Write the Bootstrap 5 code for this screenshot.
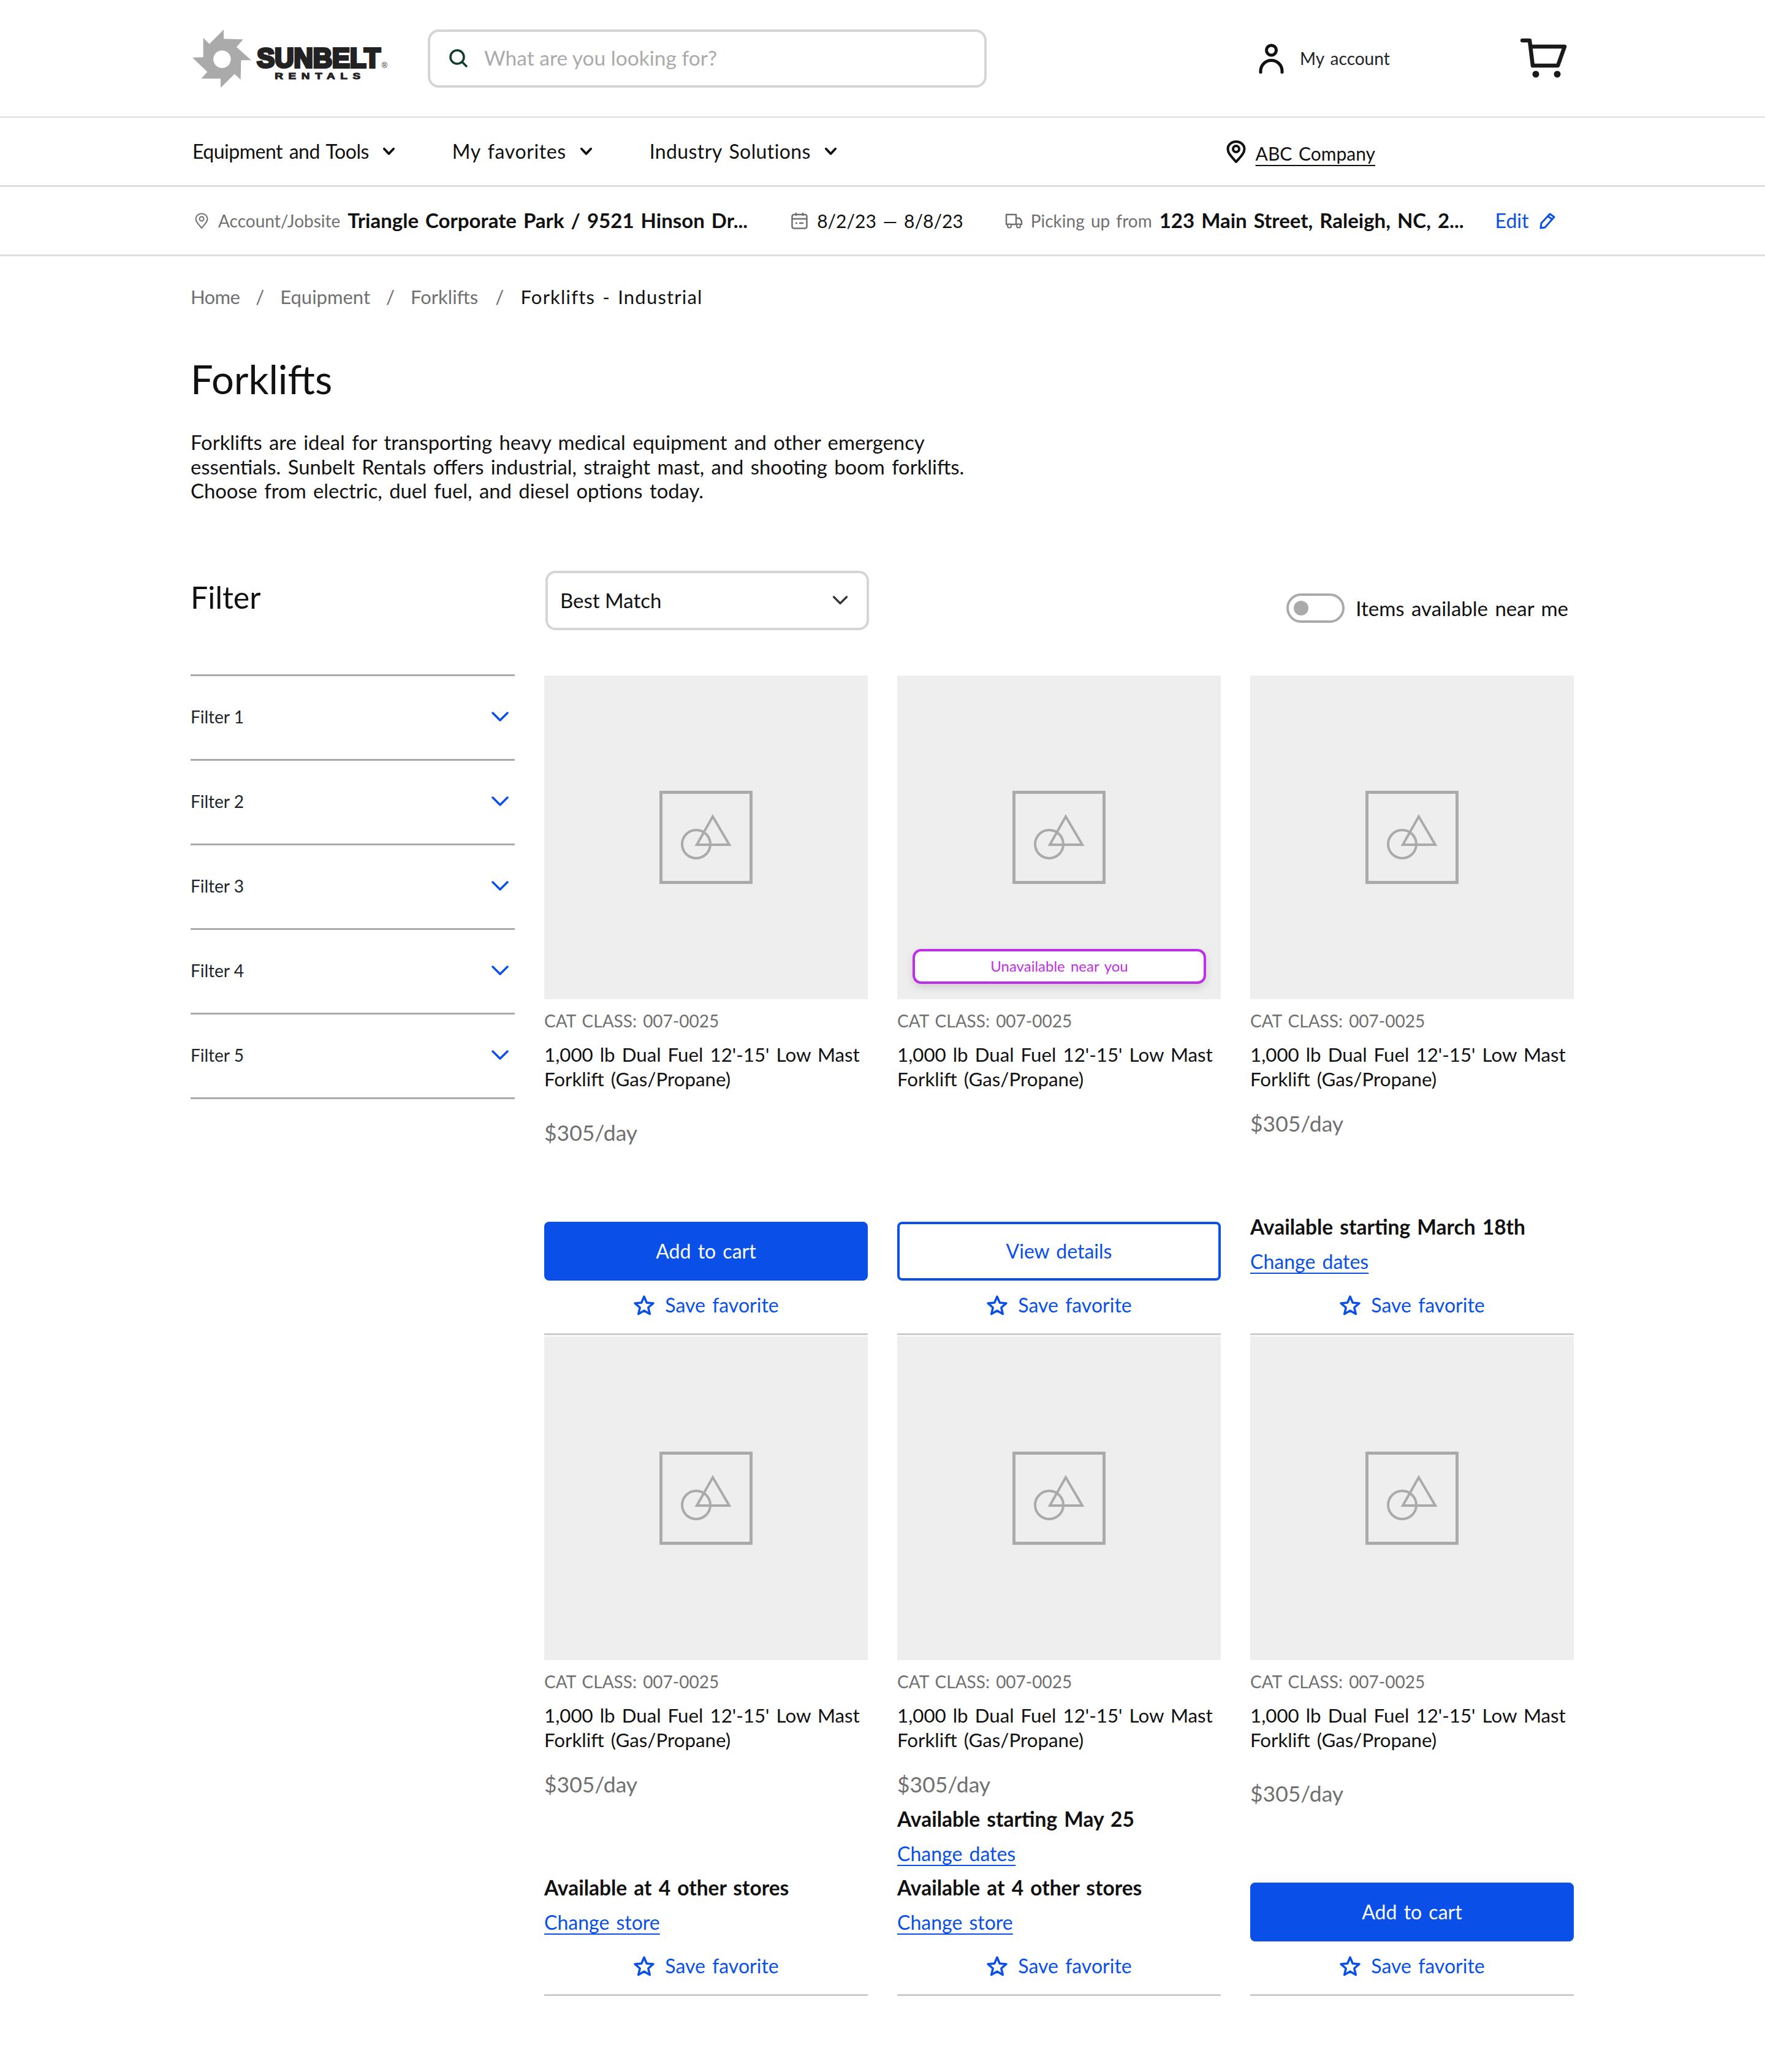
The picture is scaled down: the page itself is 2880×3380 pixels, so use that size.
<!DOCTYPE html>
<html lang="en"><head><meta charset="utf-8"><title>Forklifts</title>
<link href="https://cdn.jsdelivr.net/npm/bootstrap@5.3.0/dist/css/bootstrap.min.css" rel="stylesheet">
<style>
body{font-family:"Lato","Noto Sans",sans-serif;font-size:32px;color:#111;background:#fff;min-height:3380px;word-spacing:3px}
a{text-decoration:none}
.sb-blue{color:#0a50e8}
.sb-grey{color:#707070}
.top-bar{height:192px;padding-left:300px;border-bottom:2px solid #ddd}
.sb-search{width:912px;height:95px;margin-left:38px;border:4px solid #d5d5d5;border-radius:18px;padding-left:30px;gap:26px}
.sb-search input{border:0;outline:0;padding:0 0 2px;flex:1;font-size:33.5px;background:transparent;box-shadow:none}
.sb-search input::placeholder{color:#aaa}
.sb-account{margin-left:444px;gap:26px;font-size:28px}
.sb-cart{margin-left:213px}
.main-nav{height:113px;padding-left:314px;padding-right:636px;border-bottom:3px solid #ddd}
.main-nav .sb-item{color:#111;margin-right:93px;gap:22px}
.main-nav .sb-item:nth-child(1){letter-spacing:-.5px}
.main-nav .sb-item:nth-child(2){letter-spacing:.6px}
.main-nav .sb-item:nth-child(3){letter-spacing:.4px}
.sb-company{gap:18px;margin-top:6px;color:#111;font-size:30px;text-decoration:underline;text-underline-offset:7px;text-decoration-thickness:2px}
.sub-bar{height:113px;padding-left:318px;border-bottom:3px solid #ddd}
.sub-bar .sb-small{font-size:28px;color:#707070;margin-right:12px}
.sub-bar b{font-weight:700;font-size:33px}
.sb-dates{font-size:30px}
.sb-edit{margin-left:51px;gap:17px}
.sb-ic-cal{margin-left:71px;margin-right:15px}
.sb-ic-truck{margin-left:68px;margin-right:13px}
.page-main{padding:0 312px 0 311px}
.sb-crumbs{margin:0;padding-top:47px;font-size:31px;line-height:38px;--bs-breadcrumb-divider-color:#707070;--bs-breadcrumb-item-padding-x:26px}
.sb-crumbs a{color:#707070}
.sb-crumbs li:first-child a{letter-spacing:-.6px}
.sb-crumbs .active{color:#111;letter-spacing:1.2px;padding-left:28px}
.sb-title{font-size:65px;font-weight:400;line-height:80px;margin:75px 0 0}
.sb-intro{width:1290px;line-height:39.5px;margin:44px 0 0;font-size:32.8px}
.sb-layout{margin-top:110px;gap:48px}
.sb-side{width:529px;flex:none}
.sb-side h2{font-size:50px;font-weight:400;line-height:60px;margin:13px 0 96px}
.list-group-flush>.sb-filter{height:138px;border-width:3px 0 0;border-style:solid;border-color:#aaa;padding:0 0 3px;font-size:28px;border-radius:0;background:transparent}
.list-group-flush>.sb-filter:last-child{height:141px;border-width:3px 0}
.sb-filter svg{margin-right:10px}
.sb-toolbar{height:97px;margin-bottom:74px}
.sb-select{width:528px;height:97px;margin-left:2px;border:4px solid #d5d5d5;border-radius:16px;padding:2px 20px 0;font-size:33px;color:#111;background-size:28px;background-position:right 29px center}
.sb-switch{gap:18px;margin:0 9px 0 0;padding:37px 0 0;min-height:0}
.sb-switch .form-check-input{width:95px;height:48px;margin:0;float:none;border:4px solid #aaa;background-position:left center;background-size:40px;background-image:url("data:image/svg+xml,%3csvg xmlns='http://www.w3.org/2000/svg' viewBox='-4 -4 8 8'%3e%3ccircle r='2.4' fill='%23aaa'/%3e%3c/svg%3e");box-shadow:none}
.sb-switch label{font-size:33px}
.sb-grid{grid-template-columns:repeat(3,528px);column-gap:48px;row-gap:2px}
.sb-prod{min-height:1076px;border-bottom:3px solid #ccc}
.sb-pic{height:528px;background:#eee;position:relative}
.sb-flag{position:absolute;left:25px;right:24px;bottom:25px;height:57px;background:#fff;border:4px solid #bf2fe8;border-radius:14px;color:#bf2fe8;font-size:24px;box-shadow:0 6px 14px rgba(0,0,0,.12)}
.sb-cat{margin-top:20px;font-size:28px;line-height:30px;color:#707070}
.sb-name{margin-top:20px;line-height:40px;font-size:31.3px}
.sb-price{font-size:35.5px;line-height:44px;color:#707070;margin-top:31px}
.sb-price.sb-low{margin-top:46px}
.sb-foot{margin-top:auto}
.sb-avail{padding-bottom:11px}
.sb-avail b{display:block;line-height:40px;font-size:33.5px;font-weight:700;margin-bottom:17px}
.sb-avail a{display:block;line-height:40px;text-decoration:underline;text-underline-offset:6px;text-decoration-thickness:2px}
.sb-avail + .sb-avail{margin-top:4px}
.sb-prod .btn{height:96px;width:100%;font-size:32px;border-radius:8px;border-width:4px}
.sb-prod .btn-primary{--bs-btn-bg:#0a50e8;--bs-btn-border-color:#0a50e8;--bs-btn-color:#fff}
.sb-prod .btn-outline-primary{--bs-btn-bg:#fff;--bs-btn-border-color:#0a50e8;--bs-btn-color:#0a50e8;background:#fff}
.sb-save{height:86px;padding-bottom:6px;gap:16px;color:#0a50e8}
</style></head><body>
<svg width="0" height="0" class="position-absolute"><defs>
<symbol id="ph" viewBox="0 0 152 152"><rect x="2.5" y="2.5" width="147" height="147" fill="none" stroke="#aaa" stroke-width="5"/><circle cx="60" cy="87" r="23" fill="none" stroke="#aaa" stroke-width="4"/><path d="M87 42 61 88h53z" fill="none" stroke="#aaa" stroke-width="4"/></symbol>
<symbol id="star" viewBox="0 0 36 34"><path d="M18 3 22.2 13 33 13.9 24.800 21 27.300 31.500 18 25.900 8.700 31.500 11.200 21 3 13.900 13.800 13z" fill="none" stroke="#0a50e8" stroke-width="3.500" stroke-linejoin="round"/></symbol>
<symbol id="chev" viewBox="0 0 22 14"><path d="M3 2.500 11 11 19 2.500" fill="none" stroke="#111" stroke-width="4" stroke-linecap="round" stroke-linejoin="round"/></symbol>
<symbol id="fchev" viewBox="0 0 28 16"><path d="M2 2 14 14 26 2" fill="none" stroke="#0a50e8" stroke-width="3.500" stroke-linecap="round" stroke-linejoin="round"/></symbol>
</defs></svg>

<header class="top-bar d-flex align-items-center">
<svg width="360" height="130" viewBox="0 0 1080 390" role="img" aria-label="Sunbelt Rentals">
<path fill="#aaa" fill-rule="evenodd" d="M195 55 195 100 290 103 258 140 330 205 280 205 278 300 248 272 180 340 180 295 85 295 115 262 42 192 95 190 95 95 125 125zM187 157a43 43 0 1 0 .1 0z"/>
<text x="358" y="240" font-family="Liberation Sans" font-weight="700" font-size="132" fill="#222" stroke="#222" stroke-width="12" textLength="604" lengthAdjust="spacingAndGlyphs">SUNBELT</text>
<text x="445" y="297" font-family="Liberation Sans" font-weight="700" font-size="44" letter-spacing="20" fill="#222" stroke="#222" stroke-width="3" textLength="445" lengthAdjust="spacingAndGlyphs">RENTALS</text>
<text x="968" y="243" font-family="Liberation Sans" font-size="38" fill="#222">®</text>
</svg>
<form class="sb-search d-flex align-items-center">
<svg width="32" height="32" viewBox="0 0 32 32"><circle cx="14" cy="14" r="11" fill="none" stroke="#0f3d2e" stroke-width="3.500"/><path d="M22 22 29 29" stroke="#0f3d2e" stroke-width="3.500" stroke-linecap="round"/></svg>
<input type="text" class="form-control" placeholder="What are you looking for?">
</form>
<a href="#" class="sb-account d-flex align-items-center text-dark">
<svg width="41" height="50" viewBox="0 0 41 50"><circle cx="20.500" cy="12" r="8" fill="none" stroke="#111" stroke-width="5"/><path d="M3 48V46a17.500 17.500 0 0 1 35 0V48" fill="none" stroke="#111" stroke-width="5" stroke-linecap="round"/></svg>
My account</a>
<a href="#" class="sb-cart d-block" aria-label="Cart">
<svg width="76" height="68" viewBox="0 0 76 68"><path d="M3 5H15L20 46H61L72 15H17" fill="none" stroke="#1a1a1a" stroke-width="6.500" stroke-linecap="round" stroke-linejoin="round"/><circle cx="25" cy="60" r="5.500" fill="#1a1a1a"/><circle cx="60" cy="60" r="5.500" fill="#1a1a1a"/></svg></a>
</header>

<nav class="main-nav d-flex align-items-center">
<a href="#" class="sb-item d-flex align-items-center">Equipment and Tools <svg width="21" height="14"><use href="#chev"/></svg></a>
<a href="#" class="sb-item d-flex align-items-center">My favorites <svg width="21" height="14"><use href="#chev"/></svg></a>
<a href="#" class="sb-item d-flex align-items-center">Industry Solutions <svg width="21" height="14"><use href="#chev"/></svg></a>
<div class="ms-auto d-flex align-items-center gap-3">
<svg width="32" height="37" viewBox="0 0 32 37"><path d="M16 35C8 26 2.500 21 2.500 14a13.500 12 0 0 1 27 0C29.500 21 24 26 16 35z" fill="none" stroke="#111" stroke-width="4" stroke-linejoin="round"/><circle cx="16" cy="14" r="5" fill="none" stroke="#111" stroke-width="4"/></svg>
<a href="#" class="sb-company">ABC Company</a></div>
</nav>

<div class="sub-bar d-flex align-items-center">
<svg width="22" height="26" viewBox="0 0 22 26" class="me-3"><path d="M11 25C5 18 1.500 14.500 1.500 10a9.500 8.500 0 0 1 19 0C20.500 14.500 17 18 11 25z" fill="none" stroke="#707070" stroke-width="2"/><circle cx="11" cy="10" r="3.500" fill="none" stroke="#707070" stroke-width="2"/></svg>
<span class="sb-small">Account/Jobsite</span>
<b>Triangle Corporate Park / 9521 Hinson Dr...</b>
<svg width="27" height="28" viewBox="0 0 27 28" class="sb-ic-cal"><rect x="1.500" y="4" width="24" height="22.500" rx="3" fill="none" stroke="#707070" stroke-width="2.500"/><path d="M1.500 11H25.500M8 1V6M19 1V6M7 18H10M13 18H20" stroke="#707070" stroke-width="2.500"/></svg>
<span class="sb-dates">8/2/23 — 8/8/23</span>
<svg width="29" height="26" viewBox="0 0 29 26" class="sb-ic-truck"><path d="M2 3H18V19H2zM18 9H24L27 14V19H18" fill="none" stroke="#707070" stroke-width="2.500" stroke-linejoin="round"/><circle cx="7" cy="21.500" r="3" fill="#fff" stroke="#707070" stroke-width="2"/><circle cx="22" cy="21.500" r="3" fill="#fff" stroke="#707070" stroke-width="2"/></svg>
<span class="sb-small">Picking up from</span>
<b>123 Main Street, Raleigh, NC, 2...</b>
<a href="#" class="sb-blue sb-edit d-flex align-items-center">Edit
<svg width="28" height="28" viewBox="0 0 28 28"><path d="M18 3 25 8 10 25 3 26 4 18z" fill="none" stroke="#0a50e8" stroke-width="3" stroke-linejoin="round"/><path d="M15 7 22 12" stroke="#0a50e8" stroke-width="3"/></svg></a>
</div>

<main class="page-main">
<ol class="breadcrumb sb-crumbs">
<li class="breadcrumb-item"><a href="#">Home</a></li>
<li class="breadcrumb-item"><a href="#">Equipment</a></li>
<li class="breadcrumb-item"><a href="#">Forklifts</a></li>
<li class="breadcrumb-item active">Forklifts - Industrial</li>
</ol>
<h1 class="sb-title">Forklifts</h1>
<p class="sb-intro">Forklifts are ideal for transporting heavy medical equipment and other emergency essentials. Sunbelt Rentals offers industrial, straight mast, and shooting boom forklifts. Choose from electric, duel fuel, and diesel options today.</p>

<div class="d-flex sb-layout">
<aside class="sb-side">
<h2>Filter</h2>
<div class="list-group list-group-flush">
<button class="list-group-item sb-filter d-flex justify-content-between align-items-center">Filter 1<svg width="28" height="16"><use href="#fchev"/></svg></button>
<button class="list-group-item sb-filter d-flex justify-content-between align-items-center">Filter 2<svg width="28" height="16"><use href="#fchev"/></svg></button>
<button class="list-group-item sb-filter d-flex justify-content-between align-items-center">Filter 3<svg width="28" height="16"><use href="#fchev"/></svg></button>
<button class="list-group-item sb-filter d-flex justify-content-between align-items-center">Filter 4<svg width="28" height="16"><use href="#fchev"/></svg></button>
<button class="list-group-item sb-filter d-flex justify-content-between align-items-center">Filter 5<svg width="28" height="16"><use href="#fchev"/></svg></button>
</div>
</aside>
<section class="flex-grow-1">
<div class="sb-toolbar d-flex justify-content-between align-items-start">
<select class="form-select sb-select"><option>Best Match</option></select>
<div class="form-check form-switch sb-switch d-flex align-items-center"><input class="form-check-input" type="checkbox" id="near" role="switch"><label class="form-check-label" for="near">Items available near me</label></div>
</div>
<div class="d-grid sb-grid">

<article class="sb-prod d-flex flex-column">
<div class="sb-pic d-flex align-items-center justify-content-center"><svg width="152" height="152"><use href="#ph"/></svg></div>
<div class="sb-cat">CAT CLASS: 007-0025</div>
<div class="sb-name">1,000 lb Dual Fuel 12'-15' Low Mast Forklift (Gas/Propane)</div>
<div class="sb-price sb-low">$305/day</div>
<div class="sb-foot"><a href="#" class="btn btn-primary d-flex align-items-center justify-content-center">Add to cart</a>
<a href="#" class="sb-save d-flex align-items-center justify-content-center"><svg width="36" height="34"><use href="#star"/></svg>Save favorite</a></div>
</article>

<article class="sb-prod d-flex flex-column">
<div class="sb-pic d-flex align-items-center justify-content-center"><svg width="152" height="152"><use href="#ph"/></svg><div class="sb-flag d-flex align-items-center justify-content-center">Unavailable near you</div></div>
<div class="sb-cat">CAT CLASS: 007-0025</div>
<div class="sb-name">1,000 lb Dual Fuel 12'-15' Low Mast Forklift (Gas/Propane)</div>
<div class="sb-foot"><a href="#" class="btn btn-outline-primary d-flex align-items-center justify-content-center">View details</a>
<a href="#" class="sb-save d-flex align-items-center justify-content-center"><svg width="36" height="34"><use href="#star"/></svg>Save favorite</a></div>
</article>

<article class="sb-prod d-flex flex-column">
<div class="sb-pic d-flex align-items-center justify-content-center"><svg width="152" height="152"><use href="#ph"/></svg></div>
<div class="sb-cat">CAT CLASS: 007-0025</div>
<div class="sb-name">1,000 lb Dual Fuel 12'-15' Low Mast Forklift (Gas/Propane)</div>
<div class="sb-price">$305/day</div>
<div class="sb-foot"><div class="sb-avail"><b>Available starting March 18th</b><a href="#" class="sb-blue">Change dates</a></div>
<a href="#" class="sb-save d-flex align-items-center justify-content-center"><svg width="36" height="34"><use href="#star"/></svg>Save favorite</a></div>
</article>

<article class="sb-prod d-flex flex-column">
<div class="sb-pic d-flex align-items-center justify-content-center"><svg width="152" height="152"><use href="#ph"/></svg></div>
<div class="sb-cat">CAT CLASS: 007-0025</div>
<div class="sb-name">1,000 lb Dual Fuel 12'-15' Low Mast Forklift (Gas/Propane)</div>
<div class="sb-price">$305/day</div>
<div class="sb-foot"><div class="sb-avail"><b>Available at 4 other stores</b><a href="#" class="sb-blue">Change store</a></div>
<a href="#" class="sb-save d-flex align-items-center justify-content-center"><svg width="36" height="34"><use href="#star"/></svg>Save favorite</a></div>
</article>

<article class="sb-prod d-flex flex-column">
<div class="sb-pic d-flex align-items-center justify-content-center"><svg width="152" height="152"><use href="#ph"/></svg></div>
<div class="sb-cat">CAT CLASS: 007-0025</div>
<div class="sb-name">1,000 lb Dual Fuel 12'-15' Low Mast Forklift (Gas/Propane)</div>
<div class="sb-price">$305/day</div>
<div class="sb-foot"><div class="sb-avail"><b>Available starting May 25</b><a href="#" class="sb-blue">Change dates</a></div><div class="sb-avail"><b>Available at 4 other stores</b><a href="#" class="sb-blue">Change store</a></div>
<a href="#" class="sb-save d-flex align-items-center justify-content-center"><svg width="36" height="34"><use href="#star"/></svg>Save favorite</a></div>
</article>

<article class="sb-prod d-flex flex-column">
<div class="sb-pic d-flex align-items-center justify-content-center"><svg width="152" height="152"><use href="#ph"/></svg></div>
<div class="sb-cat">CAT CLASS: 007-0025</div>
<div class="sb-name">1,000 lb Dual Fuel 12'-15' Low Mast Forklift (Gas/Propane)</div>
<div class="sb-price sb-low">$305/day</div>
<div class="sb-foot"><a href="#" class="btn btn-primary d-flex align-items-center justify-content-center">Add to cart</a>
<a href="#" class="sb-save d-flex align-items-center justify-content-center"><svg width="36" height="34"><use href="#star"/></svg>Save favorite</a></div>
</article>

</div>
</section>
</div>
</main>
<script src="https://cdn.jsdelivr.net/npm/bootstrap@5.3.0/dist/js/bootstrap.bundle.min.js"></script>
</body></html>
